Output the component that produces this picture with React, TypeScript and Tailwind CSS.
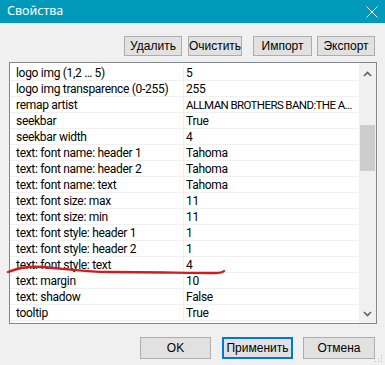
import React from "react";

const rows: [string, string][] = [
  ["logo img (1,2 … 5)", "5"],
  ["logo img transparence (0-255)", "255"],
  ["remap artist", "ALLMAN BROTHERS BAND:THE A..."],
  ["seekbar", "True"],
  ["seekbar width", "4"],
  ["text: font name: header 1", "Tahoma"],
  ["text: font name: header 2", "Tahoma"],
  ["text: font name: text", "Tahoma"],
  ["text: font size: max", "11"],
  ["text: font size: min", "11"],
  ["text: font style: header 1", "1"],
  ["text: font style: header 2", "1"],
  ["text: font style: text", "4"],
  ["text: margin", "10"],
  ["text: shadow", "False"],
  ["tooltip", "True"],
];

function Btn({ label, w, def }: { label: string; w: string; def?: boolean }) {
  return (
    <div
      className={`${w} flex items-center justify-center bg-[#e1e1e1] text-[12px] text-black leading-none ${
        def ? "border border-[#0078d7] shadow-[inset_0_0_0_1px_#0078d7]" : "border border-[#adadad]"
      }`}
    >
      {label}
    </div>
  );
}

export default function App() {
  return (
    <div
      className="relative w-[385px] h-[365px] bg-[#f0f0f0] flex flex-col overflow-hidden"
      style={{ fontFamily: "'Liberation Sans', Arial, sans-serif" }}
    >
      {/* title bar */}
      <div className="h-[23px] bg-[#0099bc] flex items-center justify-between pl-[7px] pr-[7px]">
        <span className="text-white text-[12.5px]" style={{ fontFamily: "'Noto Sans', sans-serif" }}>
          Свойства
        </span>
        <svg width="12" height="12" viewBox="0 0 12 12" className="mt-[1px]">
          <path d="M0.5 0.5 L11.5 11.5 M11.5 0.5 L0.5 11.5" stroke="white" strokeWidth="1" fill="none" />
        </svg>
      </div>

      {/* top buttons */}
      <div className="flex h-[20px] mt-[13px] pl-[124px]">
        <Btn label="Удалить" w="w-[58px] h-[20px]" />
        <div className="w-[6px]" />
        <Btn label="Очистить" w="w-[54px] h-[20px]" />
        <div className="w-[11px]" />
        <Btn label="Импорт" w="w-[59px] h-[20px]" />
        <div className="w-[5px]" />
        <Btn label="Экспорт" w="w-[58px] h-[20px]" />
      </div>

      {/* list box */}
      <div className="ml-[9px] mt-[6px] w-[368px] h-[262px] border border-[#828790] bg-white flex">
        <div
          className="w-[349px] pt-[2px] text-[12px] text-black tracking-[-0.3px]"
          style={{ fontFamily: "Roboto, 'Liberation Sans', sans-serif" }}
        >
          {rows.map(([k, v], i) => (
            <div key={i} className="flex h-[16px] border-b border-[#f0f0f0] leading-[16px]">
              <div className="w-[174px] pl-[6px] border-r border-[#f0f0f0] whitespace-nowrap overflow-hidden">
                {k}
              </div>
              <div
                className={`flex-1 pl-[2px] whitespace-nowrap overflow-hidden ${
                  v.length > 20 ? "text-[11.5px] tracking-[-0.6px]" : ""
                }`}
              >
                {v}
              </div>
            </div>
          ))}
        </div>
        <div className="w-[17px] bg-[#f0f0f0] flex flex-col items-center">
          <div className="h-[17px] flex items-center justify-center mt-[2px]">
            <svg width="9" height="6" viewBox="0 0 9 6">
              <path d="M1 5 L4.5 1.5 L8 5" stroke="#606060" strokeWidth="1.6" fill="none" />
            </svg>
          </div>
          <div className="mt-[43px] w-[15px] h-[46px] bg-[#cdcdcd]" />
          <div className="flex-1" />
          <div className="h-[17px] flex items-center justify-center mb-[1px]">
            <svg width="9" height="6" viewBox="0 0 9 6">
              <path d="M1 1 L4.5 4.5 L8 1" stroke="#606060" strokeWidth="1.6" fill="none" />
            </svg>
          </div>
        </div>
      </div>

      {/* bottom buttons */}
      <div className="flex mt-[13px] pl-[140px] h-[22px]">
        <Btn label="OK" w="w-[71px] h-[22px]" />
        <div className="w-[11px]" />
        <Btn label="Применить" w="w-[71px] h-[22px]" def />
        <div className="w-[10px]" />
        <Btn label="Отмена" w="w-[72px] h-[22px]" />
      </div>

      {/* resize grip */}
      <svg className="absolute right-[2px] bottom-[2px]" width="8" height="8" viewBox="0 0 8 8">
        <rect x="6" y="0" width="1" height="1" fill="#bcbcbc" />
        <rect x="3" y="3" width="1" height="1" fill="#bcbcbc" />
        <rect x="6" y="3" width="1" height="1" fill="#bcbcbc" />
        <rect x="0" y="6" width="1" height="1" fill="#bcbcbc" />
        <rect x="3" y="6" width="1" height="1" fill="#bcbcbc" />
        <rect x="6" y="6" width="1" height="1" fill="#bcbcbc" />
      </svg>

      {/* red hand-drawn underline */}
      <svg className="absolute left-0 top-0 pointer-events-none" width="385" height="365">
        <path
          d="M8 272 C 18 268, 30 266, 42 267 C 60 268, 80 272, 110 272 C 150 272, 190 273, 215 273 C 220 273, 223 272, 224 271"
          stroke="#d01c1c"
          strokeWidth="2.4"
          fill="none"
          strokeLinecap="round"
        />
      </svg>
    </div>
  );
}
